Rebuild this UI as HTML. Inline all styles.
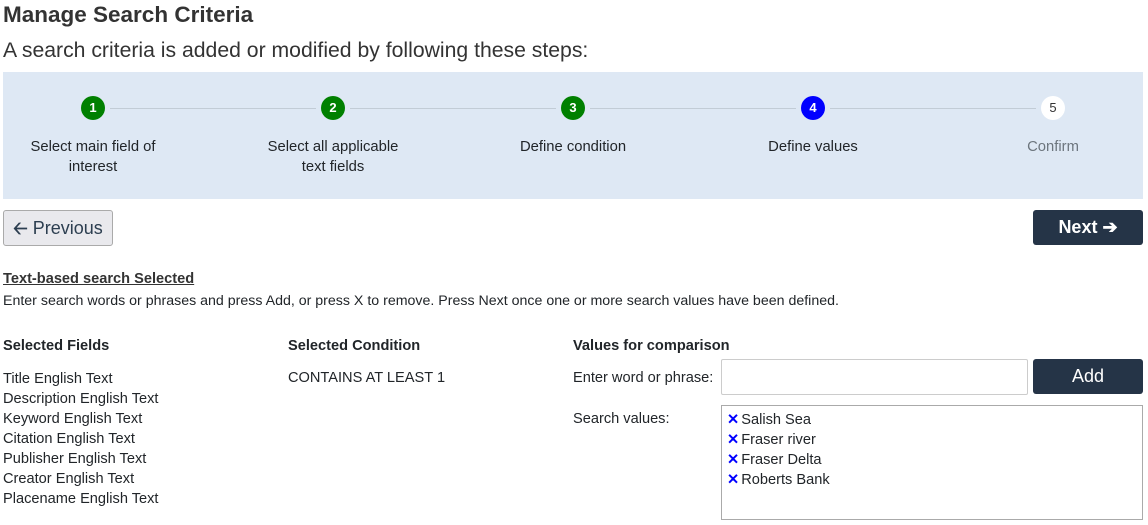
<!DOCTYPE html>
<html><head><meta charset="utf-8"><style>
body{margin:0;width:1148px;height:525px;background:#fff;font-family:"Liberation Sans",sans-serif;color:#212529;position:relative;overflow:hidden}
.a{position:absolute;white-space:nowrap}
.c{position:absolute;width:24px;height:24px;border-radius:50%;background:#008000;color:#fff;font-size:13px;font-weight:bold;text-align:center;line-height:24px;top:96px}
.l{position:absolute;width:200px;text-align:center;font-size:14.8px;line-height:20px;top:137px;color:#212529}
.ln{position:absolute;top:108px;height:1px;background:#c2ccd6}
.f{font-size:14.6px}
.x{color:#0000ff;font-weight:bold;margin-right:2px}
</style></head><body>
<div class="a" style="left:3px;top:2px;font-size:22.5px;font-weight:bold;color:#333">Manage Search Criteria</div>
<div class="a" style="left:3px;top:39px;font-size:21.2px;color:#333">A search criteria is added or modified by following these steps:</div>
<div class="a" style="left:3px;top:72px;width:1140px;height:127px;background:#dee8f4"></div>
<div class="ln" style="left:110px;width:206px"></div>
<div class="ln" style="left:350px;width:206px"></div>
<div class="ln" style="left:590px;width:206px"></div>
<div class="ln" style="left:830px;width:206px"></div>
<div class="c" style="left:81px">1</div>
<div class="c" style="left:321px">2</div>
<div class="c" style="left:561px">3</div>
<div class="c" style="left:801px;background:#0000ff">4</div>
<div class="c" style="left:1041px;background:#fff;color:#333;font-weight:normal">5</div>
<div class="l" style="left:-7px">Select main field of<br>interest</div>
<div class="l" style="left:233px">Select all applicable<br>text fields</div>
<div class="l" style="left:473px">Define condition</div>
<div class="l" style="left:713px">Define values</div>
<div class="l" style="left:953px;color:#6c757d">Confirm</div>
<div class="a" style="left:3px;top:210px;width:108px;height:34px;background:#e9e9ed;border:1px solid #aaa;border-radius:3px;font-size:18px;color:#2c3e50;line-height:34px;text-align:center"><b>&#129120;</b> Previous</div>
<div class="a" style="left:1033px;top:210px;width:110px;height:35px;background:#253447;border-radius:3px;font-size:18px;color:#fff;line-height:35px;text-align:center;font-weight:bold">Next &#10132;</div>
<div class="a f" style="left:3px;top:271px;font-weight:bold;text-decoration:underline;color:#333">Text-based search Selected</div>
<div class="a" style="left:3px;top:293px;font-size:14.2px">Enter search words or phrases and press Add, or press X to remove. Press Next once one or more search values have been defined.</div>
<div class="a f" style="left:3px;top:338px;font-weight:bold">Selected Fields</div>
<div class="a f" style="left:288px;top:338px;font-weight:bold">Selected Condition</div>
<div class="a f" style="left:573px;top:338px;font-weight:bold">Values for comparison</div>
<div class="a f" style="left:3px;top:369px;line-height:20px">Title English Text<br>Description English Text<br>Keyword English Text<br>Citation English Text<br>Publisher English Text<br>Creator English Text<br>Placename English Text</div>
<div class="a f" style="left:288px;top:370px">CONTAINS AT LEAST 1</div>
<div class="a f" style="left:573px;top:370px">Enter word or phrase:</div>
<div class="a" style="left:721px;top:359px;width:305px;height:34px;border:1px solid #ccc;border-radius:2px"></div>
<div class="a" style="left:1033px;top:359px;width:110px;height:35px;background:#253447;border-radius:3px;font-size:18px;color:#fff;line-height:35px;text-align:center">Add</div>
<div class="a f" style="left:573px;top:411px">Search values:</div>
<div class="a" style="left:721px;top:405px;width:420px;height:113px;border:1px solid #aaa"></div>
<div class="a f" style="left:727px;top:410px;line-height:20px"><span class="x">✕</span>Salish Sea<br><span class="x">✕</span>Fraser river<br><span class="x">✕</span>Fraser Delta<br><span class="x">✕</span>Roberts Bank</div>
</body></html>
